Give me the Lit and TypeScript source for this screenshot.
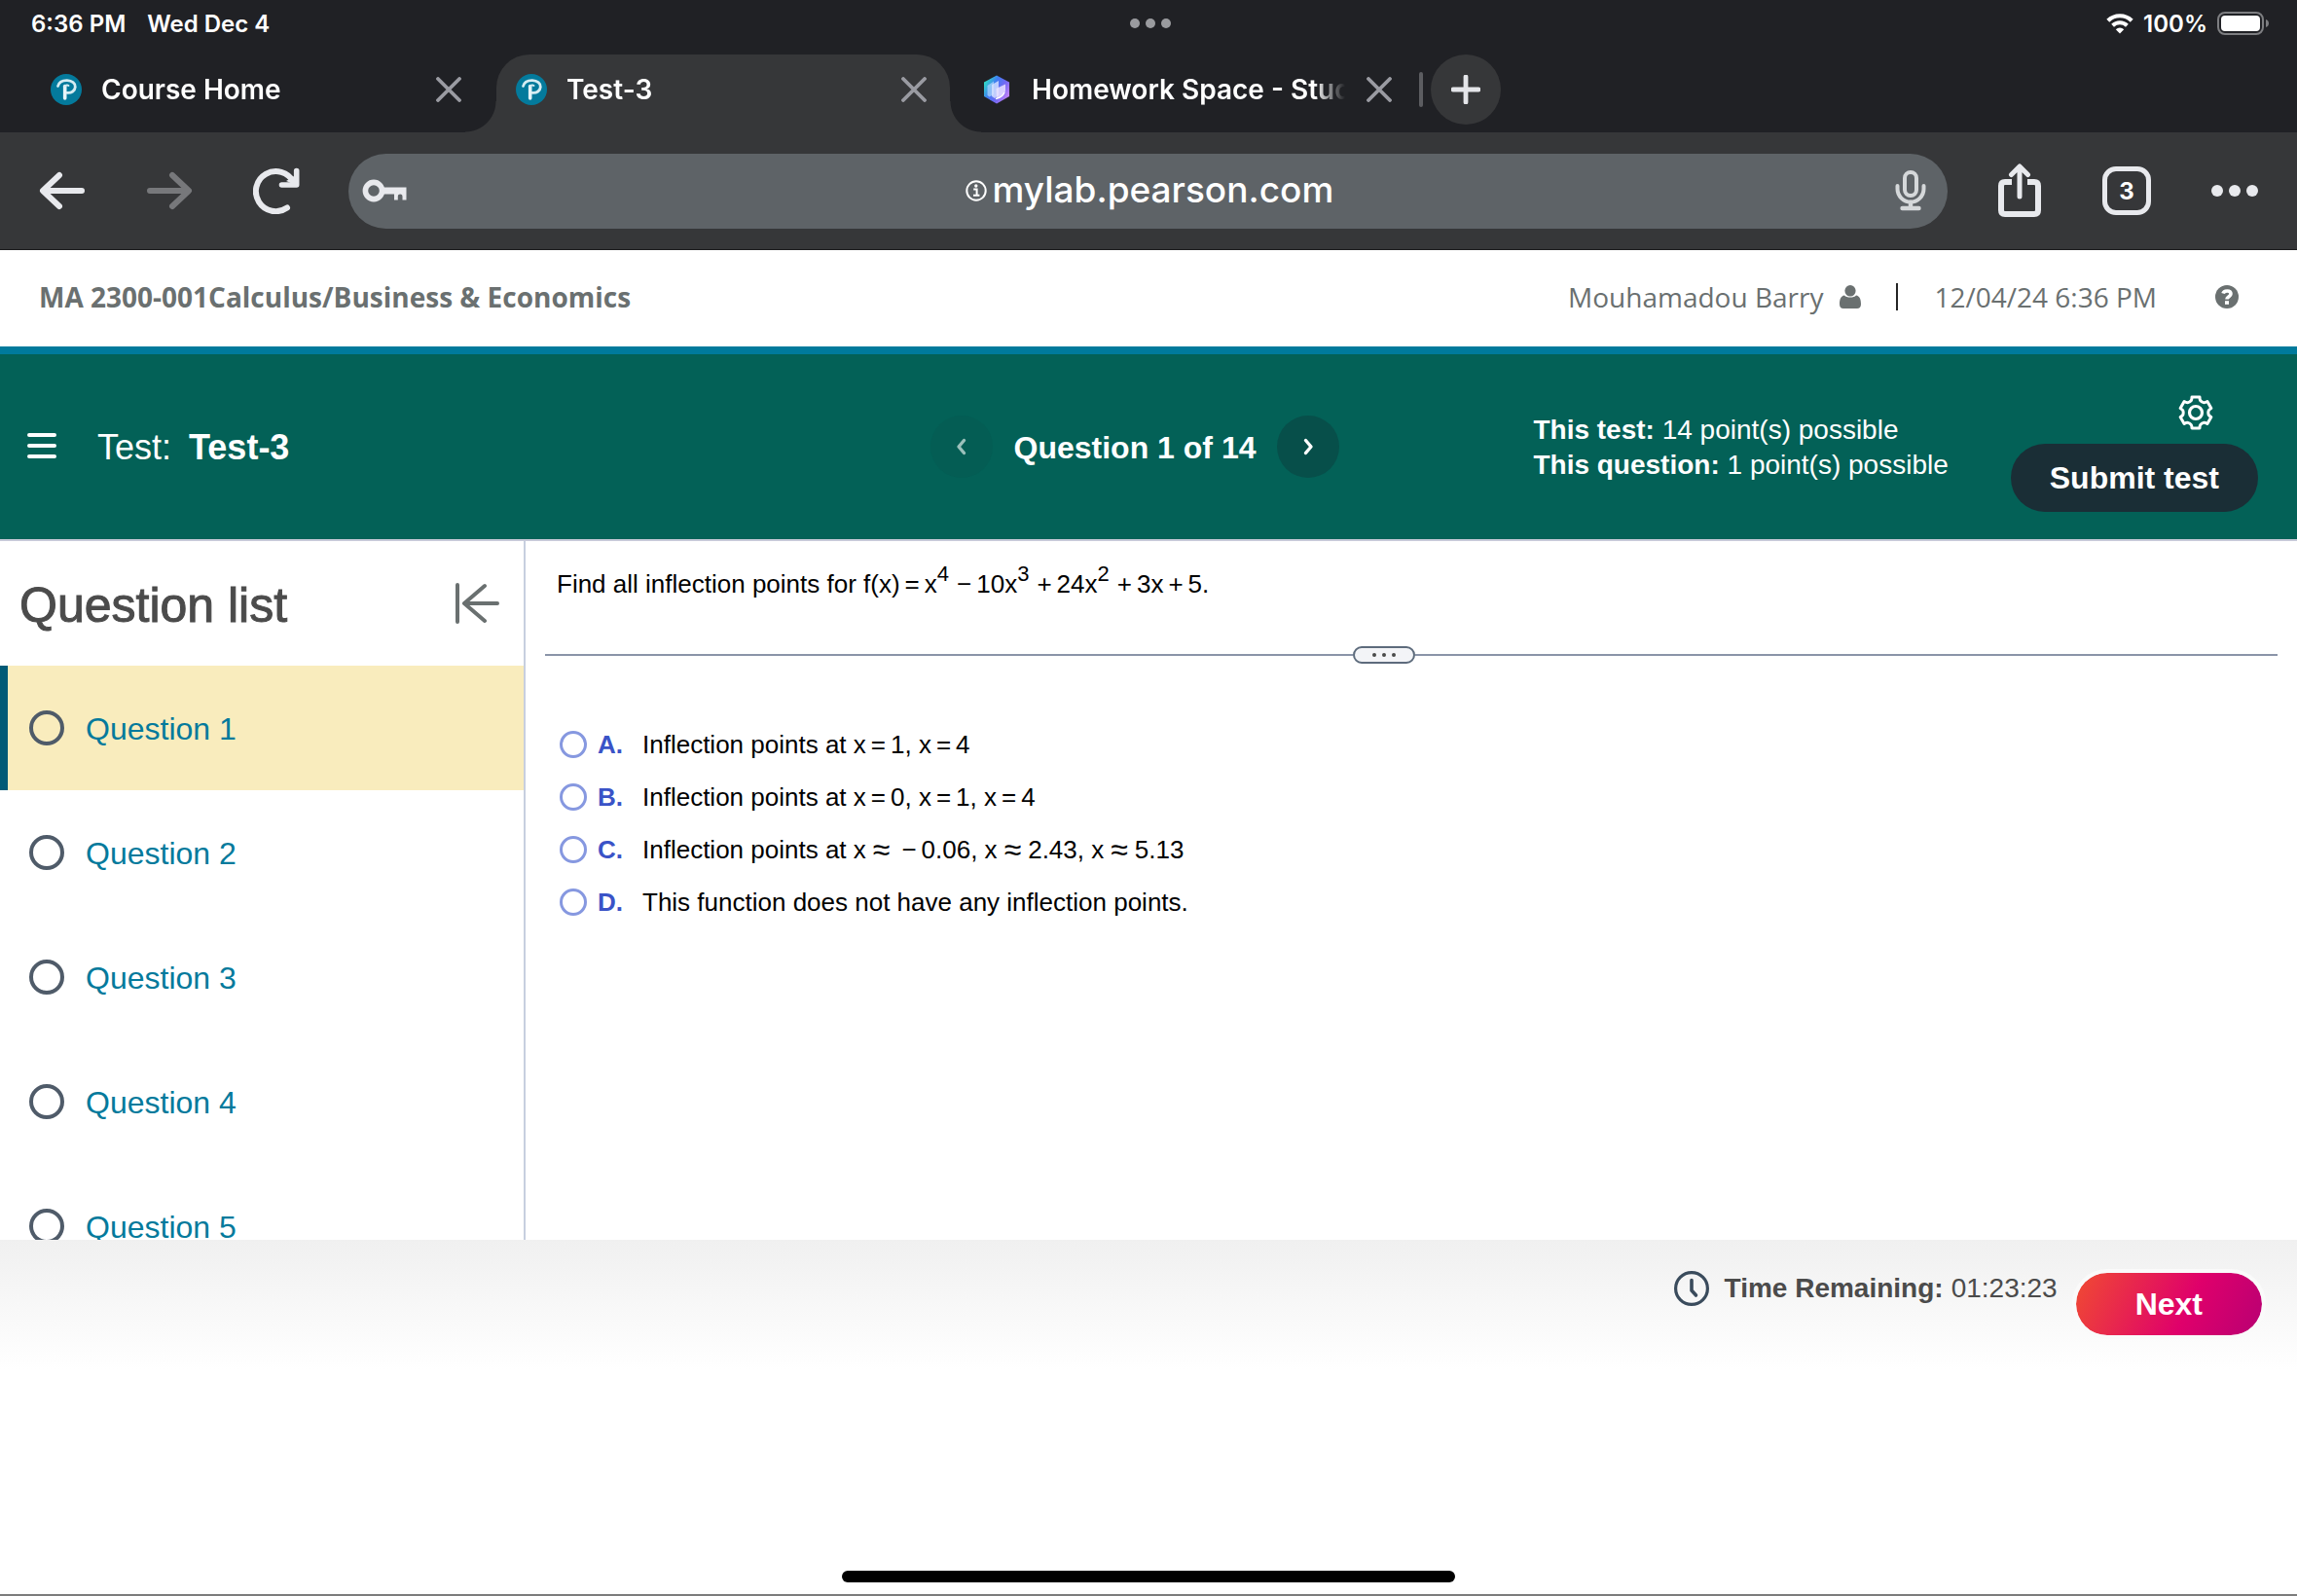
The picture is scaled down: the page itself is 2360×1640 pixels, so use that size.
import { LitElement, html, css, svg, nothing } from "lit";
import { customElement, property, state } from "lit/decorators.js";
import { classMap } from "lit/directives/class-map.js";

/* ---------- icons ---------- */

const pearsonIcon = html`<svg width="32" height="32" viewBox="0 0 32 32" aria-hidden="true">
  <circle cx="16" cy="16" r="16" fill="#047a9c" />
  <path d="M7.500 12.500C8.500 8.500 12.500 6.500 17 6.600C22 6.800 25.500 9.600 25.300 13.300C25 17.300 21.500 19.800 17 19.400" fill="none" stroke="#d5ecf2" stroke-width="2.800" stroke-linecap="round" />
  <path d="M14.700 12.500V25" fill="none" stroke="#e6f4f8" stroke-width="3.600" stroke-linecap="round" />
  <path d="M14.700 12.500C15.500 11.500 17.500 11.300 18.500 12" fill="none" stroke="#d5ecf2" stroke-width="2" stroke-linecap="round" />
</svg>`;

const homeworkIcon = html`<svg width="32" height="32" viewBox="0 0 32 32" aria-hidden="true">
  <defs>
    <linearGradient id="hex" x1="0" y1="0.2" x2="1" y2="0.8">
      <stop offset="0" stop-color="#2fe6c0" />
      <stop offset="0.35" stop-color="#3f7df2" />
      <stop offset="0.65" stop-color="#7468f4" />
      <stop offset="1" stop-color="#cf86f5" />
    </linearGradient>
  </defs>
  <path d="M16 1.500L29 8.500V23L16 30.500L3 23V8.500Z" fill="url(#hex)" />
  <path d="M6.500 12L13 7.500V21L8.500 23.500L6.500 22Z" fill="#a9d4fb" opacity="0.75" />
  <path d="M11 11L18 7V22L14 25L11 23Z" fill="#d9e4ff" opacity="0.8" />
  <path d="M15.500 15L25 10.500V17C24.500 21.500 21 24.500 16 25.500Z" fill="#e9e2ff" opacity="0.85" />
  <path d="M24 19C22.500 22.500 20 24.500 15 25.500" fill="none" stroke="#ffffff" stroke-width="1.300" />
</svg>`;

const closeIcon = html`<svg width="26" height="26" viewBox="0 0 26 26" aria-hidden="true">
  <path d="M2 2L24 24M24 2L2 24" stroke="#9a9ba2" stroke-width="3.800" stroke-linecap="round" />
</svg>`;

const plusIcon = html`<svg width="30" height="30" viewBox="0 0 30 30" aria-hidden="true">
  <path d="M15 2V28M2 15H28" stroke="#e4e5e9" stroke-width="4.800" stroke-linecap="round" />
</svg>`;

const wifiIcon = html`<svg width="28" height="21" viewBox="0 0 28 21" aria-hidden="true">
  <path d="M1.800 7.200A17.500 17.500 0 0 1 26.200 7.200" fill="none" stroke="#fff" stroke-width="4.200" />
  <path d="M6.600 12.200A10.600 10.600 0 0 1 21.400 12.200" fill="none" stroke="#fff" stroke-width="4" />
  <path d="M14 20.500L9.800 16.200A6 6 0 0 1 18.200 16.200Z" fill="#fff" />
</svg>`;

const batteryIcon = html`<svg width="54" height="24" viewBox="0 0 54 24" aria-hidden="true">
  <rect x="1" y="1" width="46" height="22" rx="7" fill="none" stroke="#7d7e81" stroke-width="2" />
  <rect x="4" y="4" width="40" height="16" rx="4" fill="#fff" />
  <path d="M50 8C52.500 9 53 10.500 53 12S52.500 15 50 16Z" fill="#7d7e81" />
</svg>`;

const backIcon = (color: string, flip = false) => html`<svg width="48" height="40" viewBox="0 0 48 40" aria-hidden="true">
  <path d=${flip ? "M4 20H43M27 4L44 20L27 36" : "M44 20H5M21 4L4 20L21 36"} fill="none" stroke=${color} stroke-width="6" stroke-linecap="round" stroke-linejoin="round" />
</svg>`;

const reloadIcon = html`<svg width="48" height="48" viewBox="0 0 48 48" aria-hidden="true">
  <path d="M35 41.500A20.500 20.500 0 1 1 41.500 15" fill="none" stroke="#e8e9ed" stroke-width="6" stroke-linecap="round" />
  <path d="M44.700 3.500V18H29.500" fill="none" stroke="#e8e9ed" stroke-width="5.600" stroke-linecap="round" stroke-linejoin="round" />
  <path d="M34 14L44 8V18Z" fill="#e8e9ed" />
</svg>`;

const keyIcon = html`<svg width="46" height="24" viewBox="0 0 46 24" aria-hidden="true">
  <circle cx="12" cy="12" r="8.600" fill="none" stroke="#e8e9ed" stroke-width="5.600" />
  <path d="M22 8.500H45.500V21.500H41.500V18C41.500 14.800 36.800 14.800 36.800 18V21.500H33V15.500H22Z" fill="#e8e9ed" />
</svg>`;

const infoIcon = html`<svg width="22" height="22" viewBox="0 0 22 22" aria-hidden="true">
  <circle cx="11" cy="11" r="9.700" fill="none" stroke="#fff" stroke-width="2" />
  <circle cx="10.800" cy="6" r="1.700" fill="#fff" />
  <path d="M8.200 9.500H11.600V15.500M8 15.800H14.400" fill="none" stroke="#fff" stroke-width="2" />
</svg>`;

const micIcon = html`<svg width="32" height="42" viewBox="0 0 32 42" aria-hidden="true">
  <rect x="10" y="2" width="12" height="24" rx="6" fill="none" stroke="#d5d8da" stroke-width="4" />
  <path d="M2.500 16V19A13.500 13.500 0 0 0 29.500 19V16" fill="none" stroke="#d5d8da" stroke-width="4" stroke-linecap="round" />
  <path d="M16 33V38M7.500 39H24.500" fill="none" stroke="#d5d8da" stroke-width="4.400" stroke-linecap="round" />
</svg>`;

const shareIcon = html`<svg width="46" height="56" viewBox="0 0 46 56" aria-hidden="true">
  <path d="M15 19H8Q4 19 4 23V48Q4 52 8 52H38Q42 52 42 48V23Q42 19 38 19H31" fill="none" stroke="#e8e9ed" stroke-width="6" />
  <path d="M23 34V4M14.500 11.500L23 3L31.500 11.500" fill="none" stroke="#e8e9ed" stroke-width="5" stroke-linecap="round" stroke-linejoin="round" />
</svg>`;

const dots = (r: number, step: number, color: string) => html`<svg
  width=${2 * step + 2 * r} height=${2 * r} viewBox="0 0 ${2 * step + 2 * r} ${2 * r}" aria-hidden="true">
  ${[0, 1, 2].map((i) => svg`<circle cx=${r + i * step} cy=${r} r=${r} fill=${color} />`)}
</svg>`;

const personIcon = html`<svg width="22" height="24" viewBox="0 0 22 24" aria-hidden="true">
  <ellipse cx="11" cy="5.800" rx="5.600" ry="5.800" fill="#6a7070" />
  <path d="M5 10.500C7 13.300 15 13.300 17 10.500C20.500 11 22 14.500 22 19.500C22 22.500 20.500 24 18 24H4C1.500 24 0 22.500 0 19.500C0 14.500 1.500 11 5 10.500Z" fill="#6a7070" />
</svg>`;

const helpIcon = html`<svg width="24" height="24" viewBox="0 0 24 24" aria-hidden="true">
  <circle cx="12" cy="12" r="12" fill="#6a7070" />
  <path d="M8 8.600C9 5.200 16 4.800 16 9C16 11.800 12 11.600 12 14.600" fill="none" stroke="#fff" stroke-width="3.600" />
  <rect x="10" y="16.200" width="4" height="3.600" fill="#fff" />
</svg>`;

const menuIcon = html`<svg width="30" height="28" viewBox="0 0 30 28" aria-hidden="true">
  <path d="M2 2H28M2 13H28M2 24H28" stroke="#fff" stroke-width="4" stroke-linecap="round" />
</svg>`;

const chevron = (left: boolean) => html`<svg width="12" height="18" viewBox="0 0 12 18" aria-hidden="true">
  <path d=${left ? "M8.500 2.500L3 9L8.500 15.500" : "M3.500 2.500L9 9L3.500 15.500"} fill="none" stroke="currentColor" stroke-width="3.400" stroke-linecap="round" stroke-linejoin="round" />
</svg>`;

/* Six-toothed outline: flat crests on the outer radius, rounded valleys between them. */
const gearOutline = (() => {
  const at = (deg: number, r: number) => {
    const a = (deg * Math.PI) / 180;
    return `${(18 + r * Math.cos(a)).toFixed(2)} ${(18 + r * Math.sin(a)).toFixed(2)}`;
  };
  let d = "";
  for (let i = 0; i < 6; i++) {
    const t = -90 + i * 60;
    d += `${i ? "L" : "M"}${at(t - 14, 16.5)}L${at(t + 14, 16.5)}Q${at(t + 18, 13)} ${at(t + 25, 13)}Q${at(t + 30, 12.6)} ${at(t + 35, 13)}Q${at(t + 42, 13)} ${at(t + 46, 16.5)}`;
  }
  return d + "Z";
})();

const gearIcon = html`<svg width="36" height="36" viewBox="0 0 36 36" aria-hidden="true">
  <path d=${gearOutline} fill="none" stroke="#fff" stroke-width="3" stroke-linejoin="round" />
  <circle cx="18" cy="18" r="6.500" fill="none" stroke="#fff" stroke-width="3.200" />
</svg>`;

const collapseIcon = html`<svg width="46" height="42" viewBox="0 0 46 42" aria-hidden="true">
  <path d="M3 2V40M44 21H10M31 3L10 21L31 39" fill="none" stroke="#6a7070" stroke-width="4" stroke-linecap="round" stroke-linejoin="round" />
</svg>`;

const clockIcon = html`<svg width="36" height="36" viewBox="0 0 36 36" aria-hidden="true">
  <circle cx="18" cy="18" r="16.400" fill="none" stroke="#3a4b5c" stroke-width="3.200" />
  <path d="M18 9.500V20L22.500 25" fill="none" stroke="#3a4b5c" stroke-width="3.600" stroke-linecap="round" stroke-linejoin="round" />
</svg>`;

const reset = css`
  :host {
    display: block;
  }
  * {
    box-sizing: border-box;
  }
  button,
  input {
    margin: 0;
    padding: 0;
    border: 0;
    background: none;
    font: inherit;
    color: inherit;
  }
  button {
    display: inline-flex;
    align-items: center;
    justify-content: center;
    flex: none;
    cursor: pointer;
  }
  a {
    color: inherit;
    text-decoration: none;
  }
  svg {
    display: block;
    flex: none;
  }
`;

/* ---------- browser frame ---------- */

@customElement("browser-frame")
class BrowserFrame extends LitElement {
  @state() private active = 1;

  private tabs = [
    { title: "Course Home", icon: pearsonIcon },
    { title: "Test-3", icon: pearsonIcon },
    { title: "Homework Space - Stud", icon: homeworkIcon },
  ];

  static styles = [
    reset,
    css`
      :host {
        font-family: Inter, "Liberation Sans", sans-serif;
        font-weight: 600;
        color: #fff;
        background: #202125;
        border-bottom: 1px solid #1c1c1e;
      }
      .status {
        display: grid;
        grid-template-columns: 1fr auto 1fr;
        align-items: center;
        height: 48px;
        padding: 0 28px 0 32px;
        font-size: 24px;
      }
      .when {
        display: flex;
        gap: 22px;
      }
      .power {
        display: flex;
        align-items: center;
        justify-content: flex-end;
        gap: 10px;
      }
      .strip {
        display: flex;
        align-items: stretch;
        height: 88px;
        padding: 8px 32px 0;
      }
      .tab {
        position: relative;
        display: flex;
        align-items: center;
        flex: 0 1 466px;
        min-width: 0;
        margin-right: 12px;
        padding: 0 24px 8px 20px;
        border-radius: 34px 34px 0 0;
        font-size: 28px;
      }
      .tab.active {
        background: #363739;
      }
      .tab.active::before,
      .tab.active::after {
        content: "";
        position: absolute;
        bottom: 0;
        width: 32px;
        height: 32px;
      }
      .tab.active::before {
        right: 100%;
        background: radial-gradient(circle at 0 0, transparent 31px, #363739 32px);
      }
      .tab.active::after {
        left: 100%;
        background: radial-gradient(circle at 100% 0, transparent 31px, #363739 32px);
      }
      .pick {
        flex: 1;
        min-width: 0;
        justify-content: flex-start;
        gap: 20px;
      }
      .title {
        flex: 1;
        min-width: 0;
        overflow: hidden;
        white-space: nowrap;
        text-align: left;
        margin-right: 22px;
        mask-image: linear-gradient(to left, transparent, #000 32px);
      }
      .new {
        display: flex;
        align-items: flex-start;
        gap: 8px;
        margin-left: -8px;
      }
      .rule {
        width: 4px;
        height: 36px;
        margin-top: 18px;
        border-radius: 2px;
        background: #5c5d61;
      }
      .add {
        width: 72px;
        height: 72px;
        border-radius: 50%;
        background: #363739;
      }
      .bar {
        display: flex;
        align-items: center;
        height: 120px;
        padding: 0 40px;
        background: #363739;
      }
      .history {
        display: flex;
        gap: 62px;
      }
      .address {
        display: flex;
        align-items: center;
        flex: 1;
        height: 77px;
        margin: 0 51px 0 50px;
        padding: 0 22px 0 14px;
        border-radius: 39px;
        background: #5e6367;
      }
      .site {
        display: flex;
        align-items: center;
        justify-content: center;
        flex: 1;
        gap: 6px;
      }
      .url {
        width: 354px;
        padding-bottom: 4px;
        font-size: 37px;
        font-weight: 500;
      }
      .tools {
        display: flex;
        align-items: center;
        gap: 62px;
      }
      .count {
        width: 50px;
        height: 50px;
        border: 5px solid #e8e9ed;
        border-radius: 14px;
        font-size: 24px;
        font-weight: 700;
      }
    `,
  ];

  render() {
    return html`
      <div class="status">
        <div class="when"><span>6:36 PM</span><span>Wed Dec 4</span></div>
        ${dots(5, 16, "#9a9b9f")}
        <div class="power">${wifiIcon}<span>100%</span>${batteryIcon}</div>
      </div>
      <div class="strip">
        ${this.tabs.map(
          (t, i) => html`<div class=${classMap({ tab: true, active: i === this.active })}>
            <button class="pick" aria-pressed=${i === this.active} @click=${() => (this.active = i)}>
              ${t.icon}<span class="title">${t.title}</span>
            </button>
            <button aria-label="Close ${t.title}">${closeIcon}</button>
          </div>`,
        )}
        <div class="new">
          <span class="rule"></span>
          <button class="add" aria-label="New tab">${plusIcon}</button>
        </div>
      </div>
      <div class="bar">
        <div class="history">
          <button aria-label="Back">${backIcon("#e8e9ed")}</button>
          <button aria-label="Forward" disabled>${backIcon("#77787b", true)}</button>
          <button aria-label="Reload">${reloadIcon}</button>
        </div>
        <div class="address">
          <button aria-label="Passwords">${keyIcon}</button>
          <label class="site">${infoIcon}<input class="url" type="text" aria-label="Address" .value=${"mylab.pearson.com"} /></label>
          <button aria-label="Voice search">${micIcon}</button>
        </div>
        <div class="tools">
          <button aria-label="Share">${shareIcon}</button>
          <button class="count" aria-label="3 open tabs">3</button>
          <button aria-label="More">${dots(6, 18, "#e8e9ed")}</button>
        </div>
      </div>
    `;
  }
}

/* ---------- course and test headers ---------- */

@customElement("course-header")
class CourseHeader extends LitElement {
  static styles = [
    reset,
    css`
      .course {
        display: flex;
        align-items: center;
        justify-content: space-between;
        height: 107px;
        padding: 0 60px 3px 40px;
        border-bottom: 8px solid #007a9c;
        font: 28px/40px "Open Sans", "Noto Sans", sans-serif;
        color: #6a7070;
      }
      .name {
        font-size: 28px;
        font-weight: 700;
        margin: 0;
      }
      .who {
        display: flex;
        align-items: center;
      }
      .user {
        display: flex;
        align-items: center;
        gap: 17px;
      }
      .sep {
        width: 2px;
        height: 28px;
        margin: 0 37px 0 36px;
        background: #252525;
      }
      .help {
        margin-left: 60px;
      }
      .test {
        display: grid;
        grid-template-columns: 1fr auto 1fr;
        align-items: center;
        height: 192px;
        padding: 0 40px 0 12px;
        background: #036157;
        border-bottom: 2px solid #c7cad9;
        font: 32px/40px "Liberation Sans", Arial, sans-serif;
        color: #fff;
      }
      .label {
        display: flex;
        align-items: center;
        gap: 42px;
        padding-left: 16px;
      }
      .heading {
        margin: 0;
        padding-top: 2px;
        font-size: 36px;
        font-weight: 400;
      }
      .heading b {
        margin-left: 8px;
      }
      .pager {
        display: flex;
        align-items: center;
        gap: 22px;
        font-weight: 700;
      }
      .pager span {
        padding-top: 2px;
      }
      .step {
        width: 64px;
        height: 64px;
        border-radius: 50%;
        background: #074f4a;
      }
      .step:disabled {
        background: #045d54;
        color: #9bc0bb;
      }
      .right {
        display: flex;
        align-items: center;
        justify-content: flex-end;
        gap: 64px;
      }
      .points {
        margin: 0;
        padding-top: 2px;
        font-size: 28px;
        line-height: 36px;
      }
      .actions {
        display: flex;
        flex-direction: column;
        align-items: flex-end;
        gap: 14px;
        padding-top: 14px;
      }
      .gear {
        margin-right: 46px;
      }
      .submit {
        height: 70px;
        padding: 0 40px;
        border-radius: 35px;
        background: #1a2e36;
        font-weight: 700;
      }
    `,
  ];

  render() {
    return html`
      <header class="course">
        <h1 class="name">MA 2300-001Calculus/Business &amp; Economics</h1>
        <div class="who">
          <a class="user" href="#profile"><span>Mouhamadou Barry</span>${personIcon}</a>
          <span class="sep"></span>
          <time>12/04/24 6:36 PM</time>
          <button class="help" aria-label="Help">${helpIcon}</button>
        </div>
      </header>
      <div class="test">
        <div class="label">
          <button aria-label="Menu">${menuIcon}</button>
          <h2 class="heading">Test: <b>Test-3</b></h2>
        </div>
        <nav class="pager" aria-label="Questions">
          <button class="step" aria-label="Previous question" disabled>${chevron(true)}</button>
          <span>Question 1 of 14</span>
          <button class="step" aria-label="Next question">${chevron(false)}</button>
        </nav>
        <div class="right">
          <p class="points">
            <b>This test:</b> 14 point(s) possible<br />
            <b>This question:</b> 1 point(s) possible
          </p>
          <div class="actions">
            <button class="gear" aria-label="Settings">${gearIcon}</button>
            <button class="submit">Submit test</button>
          </div>
        </div>
      </div>
    `;
  }
}

/* ---------- question list ---------- */

@customElement("question-list")
class QuestionList extends LitElement {
  @property({ type: Number }) current = 1;
  @property({ type: Number }) shown = 5;

  static styles = [
    reset,
    css`
      :host {
        overflow-y: auto;
        scrollbar-width: none;
        border-right: 2px solid #c7cfdf;
        font-family: "Liberation Sans", Arial, sans-serif;
      }
      .top {
        display: flex;
        align-items: center;
        justify-content: space-between;
        height: 128px;
        padding: 0 25px 0 20px;
      }
      .heading {
        margin: 0;
        padding-top: 4px;
        font-size: 50px;
        font-weight: 400;
        color: #4b4b4b;
        -webkit-text-stroke: 1px #4b4b4b;
      }
      .list {
        margin: 0;
        padding: 0;
        list-style: none;
      }
      .item {
        display: flex;
        align-items: center;
        gap: 22px;
        height: 128px;
        padding-left: 30px;
        font-size: 32px;
        color: #047a9c;
      }
      .item.current {
        background: #f9ecbd;
        box-shadow: inset 8px 0 #005a76;
      }
      .ring {
        width: 36px;
        height: 36px;
        border: 4px solid #4f5b69;
        border-radius: 50%;
      }
      .text {
        padding-top: 2px;
      }
    `,
  ];

  render() {
    return html`
      <div class="top">
        <h2 class="heading">Question list</h2>
        <button aria-label="Collapse question list">${collapseIcon}</button>
      </div>
      <ol class="list">
        ${Array.from({ length: this.shown }, (_, i) => i + 1).map(
          (n) => html`<li>
            <a class=${classMap({ item: true, current: n === this.current })} href="#question-${n}" aria-current=${n === this.current ? "true" : nothing}>
              <span class="ring"></span><span class="text">Question ${n}</span>
            </a>
          </li>`,
        )}
      </ol>
    `;
  }
}

/* ---------- question ---------- */

const op = (s: string) => html`<span class=${classMap({ op: true, approx: s === "≈" })}>${s}</span>`;

@customElement("question-view")
class QuestionView extends LitElement {
  private choices = [
    { key: "A", body: html`Inflection points at x${op("=")}1, x${op("=")}4` },
    { key: "B", body: html`Inflection points at x${op("=")}0, x${op("=")}1, x${op("=")}4` },
    { key: "C", body: html`Inflection points at x${op("≈")}${op("−")}0.06, x${op("≈")}2.43, x${op("≈")}5.13` },
    { key: "D", body: html`This function does not have any inflection points.` },
  ];

  static styles = [
    reset,
    css`
      :host {
        padding: 24px 20px 0;
        font: 26px/40px "Liberation Sans", Arial, sans-serif;
        color: #000;
        background: #fff;
      }
      .prompt {
        margin: 0;
        padding-left: 12px;
      }
      .op {
        margin: 0 5px;
      }
      .approx {
        margin: 0 7px;
        font-size: 32px;
        line-height: 0;
        vertical-align: -2px;
      }
      sup {
        font-size: 22px;
        line-height: 0;
        vertical-align: 12px;
        margin-right: 3px;
      }
      .split {
        display: flex;
        align-items: center;
        height: 18px;
        margin: 44px 0 56px;
      }
      .line {
        flex: 16;
        height: 2px;
        background: #8a94a8;
      }
      .line:first-child {
        flex: 15;
      }
      .grip {
        width: 64px;
        height: 18px;
        border: 2px solid #5d6b7c;
        border-radius: 9px;
        background: #f3f4f7;
      }
      .choices {
        margin: 0;
        padding: 0 0 0 15px;
        border: 0;
      }
      .choice {
        display: flex;
        align-items: center;
        width: fit-content;
        height: 54px;
      }
      .radio {
        appearance: none;
        flex: none;
        width: 28px;
        height: 28px;
        margin-right: 11px;
        border: 3px solid #8698e0;
        border-radius: 50%;
        background: #fff;
      }
      .radio:checked {
        background: radial-gradient(circle, #3c56c8 7px, #fff 8px);
      }
      .key {
        width: 46px;
        font-weight: 700;
        color: #3a53c7;
      }
    `,
  ];

  render() {
    return html`
      <p class="prompt">
        Find all inflection points for f(x)${op("=")}x<sup>4</sup>${op("−")}10x<sup>3</sup>${op("+")}24x<sup>2</sup>${op("+")}3x${op("+")}5.
      </p>
      <div class="split">
        <span class="line"></span>
        <button class="grip" aria-label="Resize">${dots(2, 10, "#4a4a4a")}</button>
        <span class="line"></span>
      </div>
      <fieldset class="choices" aria-label="Answer choices">
        ${this.choices.map(
          (c) => html`<label class="choice">
            <input class="radio" type="radio" name="answer" value=${c.key} />
            <span class="key">${c.key}.</span>
            <span>${c.body}</span>
          </label>`,
        )}
      </fieldset>
    `;
  }
}

/* ---------- page ---------- */

@customElement("app-root")
class AppRoot extends LitElement {
  static styles = [
    reset,
    css`
      :host {
        display: flex;
        flex-direction: column;
        height: 100vh;
        background: #fff;
        font-family: "Liberation Sans", Arial, sans-serif;
      }
      .body {
        display: grid;
        grid-template-columns: 540px 1fr;
        flex: 1;
        min-height: 0;
      }
      .foot {
        display: flex;
        flex-direction: column;
        justify-content: space-between;
        align-items: center;
        height: 366px;
        flex: none;
        background: linear-gradient(#f0f0f0, #ffffff 134px);
        border-bottom: 2px solid #7c7c7c;
        padding-bottom: 12px;
      }
      .controls {
        display: flex;
        align-items: flex-start;
        align-self: stretch;
        justify-content: flex-end;
        padding: 30px 32px 0;
        color: #4b4b4b;
      }
      .timer {
        display: flex;
        align-items: center;
        gap: 8px;
        height: 40px;
        margin-right: 15px;
        font-size: 28px;
      }
      .timer svg {
        margin-right: 8px;
      }
      .next {
        height: 72px;
        padding: 0 61px;
        border: 4px solid #fafafa;
        border-radius: 36px;
        background: linear-gradient(115deg, #f04b32, #df006b 60%, #b80073) padding-box;
        font-size: 32px;
        font-weight: 700;
        color: #fff;
      }
      .home {
        width: 630px;
        height: 12px;
        border-radius: 6px;
        background: #000;
      }
    `,
  ];

  render() {
    return html`
      <browser-frame></browser-frame>
      <course-header></course-header>
      <main class="body">
        <question-list></question-list>
        <question-view></question-view>
      </main>
      <footer class="foot">
        <div class="controls">
          <div class="timer">${clockIcon}<b>Time Remaining:</b><time>01:23:23</time></div>
          <button class="next">Next</button>
        </div>
        <span class="home"></span>
      </footer>
    `;
  }
}
